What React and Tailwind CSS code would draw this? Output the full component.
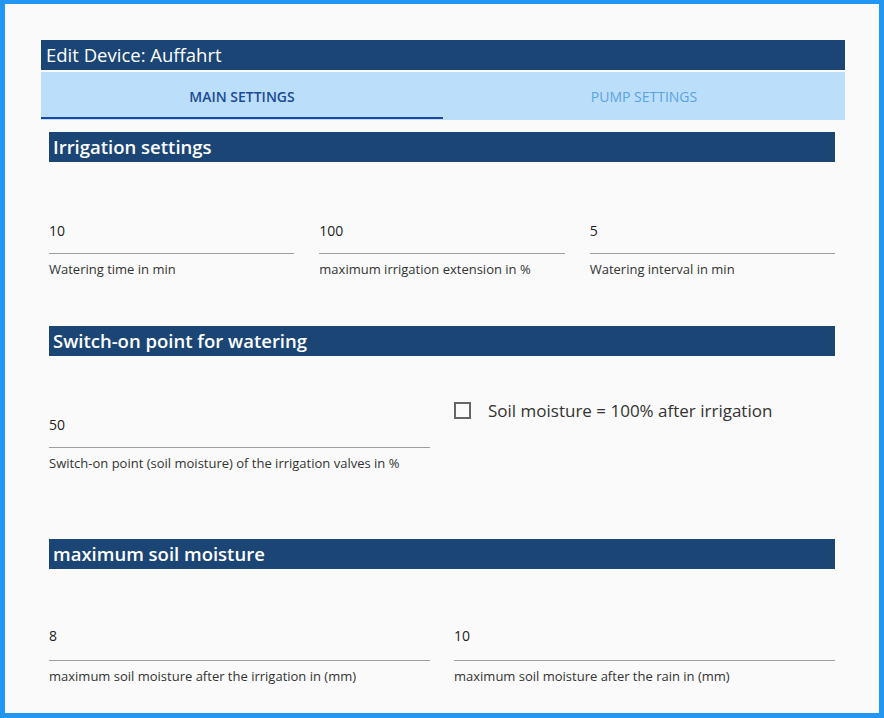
import React, { useState } from "react";

const font = { fontFamily: "'Open Sans', 'Noto Sans', sans-serif" };

const Field = ({ value, label, tall }) => (
  <div>
    <div className={`border-b border-[#9e9e9e] ${tall ? "pb-[14px]" : "pb-[12px]"}`}>
      <div className="h-[20px] text-[14px] leading-[20px] text-[#222]">{value}</div>
    </div>
    <div className="mt-[7px] text-[13px] leading-[16px] text-[#333]">{label}</div>
  </div>
);

const SectionHeader = ({ title }) => (
  <div className="h-[30px] bg-[#1a4574] pl-[4px] text-[18.5px] font-semibold leading-[30px] text-white">
    {title}
  </div>
);

export default function App() {
  const [tab, setTab] = useState(0);
  const [fullAfter, setFullAfter] = useState(false);

  const tabs = ["MAIN SETTINGS", "PUMP SETTINGS"];

  return (
    <div
      className="h-[718px] w-[884px] overflow-hidden border-x-[5px] border-t-[4px] border-b-[5px] border-[#2196f3] bg-[#fafafa] pl-[36px] pr-[34px] pt-[36px]"
      style={font}
    >
      {/* title */}
      <div className="h-[30px] bg-[#1a4574] pl-[5px] text-[18.5px] leading-[30px] text-white">
        Edit Device: Auffahrt
      </div>

      {/* tabs */}
      <div className="mt-[2px] flex h-[48px] bg-[#bbdefb]">
        {tabs.map((t, i) => (
          <button
            key={t}
            onClick={() => setTab(i)}
            className={`relative flex flex-1 items-center justify-center text-[14px] ${
              tab === i ? "font-semibold text-[#1b4a94]" : "text-[#5aa2e2]"
            }`}
          >
            {t}
            {tab === i && (
              <span className="absolute bottom-[1px] left-0 right-0 h-[2px] bg-[#1c48a0]" />
            )}
          </button>
        ))}
      </div>

      <div className="pl-[8px] pr-[10px]">
        {/* irrigation settings */}
        <div className="mt-[12px]">
          <SectionHeader title="Irrigation settings" />
          <div className="mt-[59px] grid grid-cols-3 gap-x-[25px]">
            <Field value="10" label="Watering time in min" />
            <Field value="100" label="maximum irrigation extension in %" />
            <Field value="5" label="Watering interval in min" />
          </div>
        </div>

        {/* switch-on point */}
        <div className="mt-[49px]">
          <SectionHeader title="Switch-on point for watering" />
          <div className="grid grid-cols-2 gap-x-[24px]">
            <div className="mt-[59px]">
              <Field
                value="50"
                label="Switch-on point (soil moisture) of the irrigation valves in %"
              />
            </div>
            <label className="mt-[46px] flex h-[17px] cursor-pointer items-center gap-[17px] self-start">
              <span
                onClick={() => setFullAfter(!fullAfter)}
                className="flex h-[17px] w-[17px] shrink-0 items-center justify-center border-2 border-[#666]"
              >
                {fullAfter && <span className="h-[9px] w-[9px] bg-[#1a4574]" />}
              </span>
              <span className="text-[17px] leading-[20px] text-[#333]">
                Soil moisture = 100% after irrigation
              </span>
            </label>
          </div>
        </div>

        {/* maximum soil moisture */}
        <div className="mt-[68px]">
          <SectionHeader title="maximum soil moisture" />
          <div className="mt-[57px] grid grid-cols-2 gap-x-[24px]">
            <Field tall value="8" label="maximum soil moisture after the irrigation in (mm)" />
            <Field tall value="10" label="maximum soil moisture after the rain in (mm)" />
          </div>
        </div>
      </div>
    </div>
  );
}
